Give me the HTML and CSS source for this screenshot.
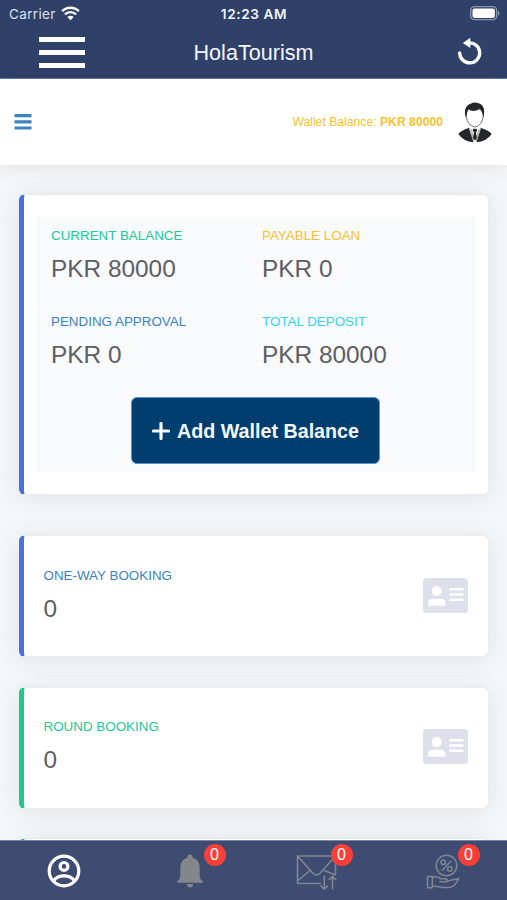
FILE: index.html
```html
<!DOCTYPE html>
<html lang="en">
<head>
<meta charset="utf-8">
<title>HolaTourism</title>
<link rel="stylesheet" href="styles.css">
</head>
<body>
<div class="app">
  <header class="header">
    <div class="status">
      <div class="carrier">Carrier
        <svg width="19" height="15" viewBox="0 0 19 15" fill="none" stroke="#fff" stroke-width="2.4"><path d="M1.1 5.2a11.9 11.9 0 0 1 16.8 0M4 8.4a7.8 7.8 0 0 1 11 0"/><path d="M6.3 11a4.5 4.5 0 0 1 6.4 0L9.500 14.200z" fill="#fff" stroke="none"/></svg>
      </div>
      <div class="clock">12:23 AM</div>
      <svg class="battery" width="31" height="15" viewBox="0 0 31 15"><rect x=".7" y=".7" width="26" height="13" rx="3.6" fill="none" stroke="#8c96b1" stroke-width="1.300"/><rect x="2.500" y="2.500" width="22.400" height="9.400" rx="2" fill="#fff"/><path d="M28 4.600q3 2.600 0 5.200z" fill="#8c96b1"/></svg>
    </div>
    <div class="titlebar">
      <div class="burger"><i></i><i></i><i></i></div>
      <h1>HolaTourism</h1>
      <svg class="reload" width="26" height="28" viewBox="0 0 26 28"><path d="M12.200 5.900A10 10 0 1 1 2.700 15.900" fill="none" stroke="#fff" stroke-width="3.300" stroke-linecap="round"/><path d="M5.800 5.900L13.300.800V11z" fill="#fff"/></svg>
    </div>
  </header>
  <nav class="topbar">
    <svg width="18" height="16" viewBox="0 0 18 16" fill="#3d84bd"><rect x=".4" width="17.200" height="3.200" rx="1"/><rect x=".4" y="6.200" width="17.200" height="3.200" rx="1"/><rect x=".4" y="12.400" width="17.200" height="3.200" rx="1"/></svg>
    <div class="wallet">Wallet Balance: <b>PKR 80000</b></div>
    <svg class="avatar" width="34" height="41" viewBox="0 0 34 41">
      <path d="M8 13Q7 10 8.500 6.500Q10.500 1.500 16 1.500Q21.500.300 24.500 5Q26.500 8 25.300 14.500L24 19Q21.500 24.500 16.700 25Q11.500 24 9.300 18.500Z" fill="#fff" stroke="#343538" stroke-width=".7"/>
      <path d="M7.600 15Q5.800 8 8.600 4.500Q10 2 12.800 2Q15.500-.200 19.500 1.100Q26 2.500 26.100 9.500Q26.300 13 25.200 15.500L24.200 11Q22.500 7.200 21.500 7.300Q15 10.300 10.500 7.600Q8.700 10 8.500 14Z" fill="#252629"/>
      <path d="M.300 32Q3 28.600 10.800 26L15.500 40.300Q5.500 39.500.300 32ZM33.700 32Q31 28.600 23 26L18.400 40.300Q28.500 39.500 33.700 32Z" fill="#252629"/>
      <path d="M11.200 25.700L15.600 38.500L14.200 30.500L13 27.500M22.700 25.700L18.200 38.500L19.600 30.500L21 27.500" fill="none" stroke="#777" stroke-width=".6"/>
      <path d="M15.300 26.700H18.500L19.300 28.400L17.900 30.300L18.900 36L17 38.600L15 36L16 30.300L14.600 28.400Z" fill="#252629"/>
    </svg>
  </nav>
  <main class="content">
    <section class="card balance">
      <div class="panel">
        <div class="stats">
          <div><h2 class="green">CURRENT BALANCE</h2><p>PKR 80000</p></div>
          <div><h2 class="amber">PAYABLE LOAN</h2><p>PKR 0</p></div>
          <div><h2 class="blue">PENDING APPROVAL</h2><p>PKR 0</p></div>
          <div><h2 class="cyan">TOTAL DEPOSIT</h2><p>PKR 80000</p></div>
        </div>
        <button class="add"><svg width="18" height="18" viewBox="0 0 18 18"><path d="M9 1.500V16.500M1.500 9H16.500" stroke="#f4f8fc" stroke-width="3.200" stroke-linecap="round"/></svg>Add Wallet Balance</button>
      </div>
    </section>
    <section class="card booking">
      <div><h2 class="blue">ONE-WAY BOOKING</h2><p>0</p></div>
      <svg width="45" height="35" viewBox="0 0 45 35"><rect width="45" height="35" rx="3.800" fill="#dddfeb"/><g fill="#fff"><circle cx="13.700" cy="13" r="5"/><path d="M5 26q0-5.200 5-5.200h7.500q5 0 5 5.200v1q0 .800-.800.800H5.800Q5 27.800 5 27z"/><rect x="26.500" y="10" width="14" height="2.600" rx=".6"/><rect x="26.500" y="15.200" width="14" height="2.600" rx=".6"/><rect x="26.500" y="20.500" width="14" height="2.600" rx=".6"/></g></svg>
    </section>
    <section class="card booking round">
      <div><h2 class="green">ROUND BOOKING</h2><p>0</p></div>
      <svg width="45" height="35" viewBox="0 0 45 35"><rect width="45" height="35" rx="3.800" fill="#dddfeb"/><g fill="#fff"><circle cx="13.700" cy="13" r="5"/><path d="M5 26q0-5.200 5-5.200h7.500q5 0 5 5.200v1q0 .800-.800.800H5.800Q5 27.800 5 27z"/><rect x="26.500" y="10" width="14" height="2.600" rx=".6"/><rect x="26.500" y="15.200" width="14" height="2.600" rx=".6"/><rect x="26.500" y="20.500" width="14" height="2.600" rx=".6"/></g></svg>
    </section>
    <section class="card booking round"></section>
  </main>
  <footer class="tabs">
    <div class="tab"><svg width="34" height="34" viewBox="0 0 34 34" fill="none" stroke="#fff" stroke-width="3.200"><circle cx="17" cy="17" r="14.800"/><circle cx="17" cy="12.400" r="3.900"/><path d="M6.500 26.500Q10.500 21.800 17 21.800T27.500 26.500"/></svg></div>
    <div class="tab"><svg width="28" height="34" viewBox="0 0 28 34" fill="#848789"><path d="M14 .500q2.700 0 2.700 3.200q6.800 1.800 7 9.800v8.700q.2 3.300 3.200 5.300v1.200H1.100v-1.200q3-2 3.200-5.300V13.500q.2-8 7-9.800Q11.300.500 14 .500zM10.900 30h6.200q0 3.400-3.100 3.400T10.900 30z"/></svg><span class="badge">0</span></div>
    <div class="tab"><svg width="42" height="38" viewBox="0 0 42 38" fill="none" stroke="#7d878f" stroke-width="1.600"><path d="M25 31.500H1.500V4H39.500V23M1.500 4L16.500 20.800Q20.500 25 24.500 20.800L39.500 4M1.500 29L14 18.500M39.500 23L28 18.500M28.300 23.500V37M24.500 33.500L28.300 37.200L32 33.500M36.500 37.500V24.500M32.800 28L36.500 24.200L40.200 28"/></svg><span class="badge">0</span></div>
    <div class="tab"><svg width="34" height="36" viewBox="0 0 34 36" fill="none" stroke="#7d878f" stroke-width="1.500"><circle cx="20.500" cy="12.500" r="10.300"/><path d="M25 8L16 17.500"/><circle cx="17.200" cy="9.200" r="2.200"/><circle cx="23.800" cy="16" r="2.200"/><path d="M1.500 23.500h4.800v11.300H1.500zM6.300 24.800Q11.500 22.500 14.500 25.800H20Q21.500 26.300 20.800 28.800H13.500M20.800 28.300L32.500 25.500Q29 34.300 23 34.600H17L6.300 32.800"/></svg><span class="badge">0</span></div>
  </footer>
</div>
</body>
</html>
```
FILE: styles.css
```css
* { box-sizing: border-box; }
body { margin: 0; font-family: "Liberation Sans", sans-serif; }
h1, h2, p { margin: 0; font-weight: 400; }
svg { display: block; flex: none; }
.app { width: 507px; height: 900px; display: flex; flex-direction: column; overflow: hidden; background: #f5f6fa; }
.header { flex: none; height: 79px; background: #2f4069; color: #f3f6fc; border-bottom: 1px solid #627aa0; }
.status { height: 27px; display: grid; grid-template-columns: 1fr auto 1fr; align-items: center; padding: 0 6px 0 9px; font-family: Inter, sans-serif; font-size: 13.5px; }
.carrier { display: flex; align-items: center; gap: 5px; letter-spacing: .35px; color: #dde2ee; }
.clock { font-weight: 600; font-size: 13.6px; letter-spacing: .6px; margin-right: 2px; }
.battery { justify-self: end; }
.titlebar { height: 51px; display: grid; grid-template-columns: 1fr auto 1fr; align-items: center; padding: 0 24px 0 39px; }
.titlebar h1 { font-size: 21.6px; line-height: 26px; padding-right: 15px; }
.burger { width: 46px; display: grid; gap: 8px; margin-top: -1px; }
.burger i { height: 5px; background: #fff; }
.reload { justify-self: end; margin-top: -3px; }
.topbar { flex: none; height: 86px; display: flex; align-items: center; padding: 0 15px 0 14px; background: #fff; position: relative; box-shadow: 0 2px 18px rgba(58, 59, 69, .1); }
.wallet { margin-left: auto; margin-right: 15px; color: #fbc02d; font-size: 12.2px; line-height: 16px; }
.content { flex: 1; min-height: 0; padding: 29px 18px 0 19px; display: flex; flex-direction: column; }
.card { flex: none; background: #fff; border: 1px solid #e8eaf1; border-left: 5px solid #4a70dc; border-radius: 6px; box-shadow: 0 2px 24px rgba(58, 59, 69, .1); }
.balance { height: 301px; padding: 22px 12px 22px 12px; margin-bottom: 40px; }
.panel { height: 255px; background: #f8fafc; padding: 11px 15px 0; display: flex; flex-direction: column; align-items: center; }
.stats { align-self: stretch; display: grid; grid-template-columns: 211px 1fr; grid-auto-rows: 85.5px; }
h2 { font-size: 13.4px; line-height: 16px; white-space: nowrap; }
.card p { font-size: 24.4px; line-height: 28px; margin-top: 11px; color: #5d5e65; }
.green { color: #20c997; }
.amber { color: #fbc02d; }
.blue { color: #3b82c4; }
.cyan { color: #36d3f0; }
.add { width: 249px; height: 67px; margin-top: -2.5px; margin-right: 1px; display: flex; align-items: center; justify-content: center; gap: 7px; border: 1px solid #5596c4; border-radius: 6px; background: #003e70; color: #f4f8fc; font: 700 19.7px "Liberation Sans", sans-serif; padding: 2px 0 0; white-space: nowrap; }
.booking { height: 122px; margin-bottom: 29.500px; padding: 31.500px 20px 0 19.500px; display: flex; justify-content: space-between; }
.booking svg { margin-top: 10px; }
.round { border-left-color: #1cc88a; }
.tabs { flex: none; height: 60px; display: grid; grid-template-columns: repeat(4, 1fr); padding: 0; background: #3e4c72; position: relative; border-top: 1px solid #7c86a1; margin-right: -1px; }
.tab { position: relative; display: flex; align-items: center; justify-content: center; padding-right: 1px; }
.tab:first-child { padding-left: 2px; }
.tab:last-child { padding-right: 4px; }
.badge { position: absolute; top: 3px; left: 76.5px; width: 22px; height: 22px; border-radius: 50%; background: #fa3e38; color: #fff; font-size: 16px; line-height: 22px; text-align: center; }
```
